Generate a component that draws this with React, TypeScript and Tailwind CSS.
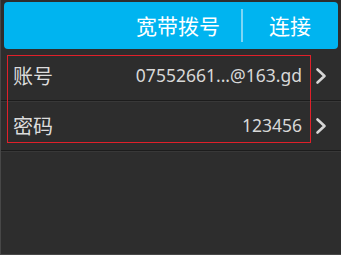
import React from "react";

const Chevron = () => (
  <svg width="12" height="18" viewBox="0 0 12 18" className="shrink-0">
    <polyline points="2.5,2.5 9.5,9 2.5,15.5" fill="none" stroke="#d6d6d6" strokeWidth="2.6" strokeLinecap="round" strokeLinejoin="round" />
  </svg>
);

const Row = ({ label, value }: { label: string; value: string }) => (
  <div className="flex items-center h-[48px] pl-[12px] pr-[14px]">
    <span className="text-[20px] text-[#dcdcdc] leading-none" style={{ fontFamily: '"Noto Sans CJK SC", sans-serif' }}>{label}</span>
    <span className="ml-auto text-[17.5px] text-[#d8d8d8] leading-none" style={{ fontFamily: '"Noto Sans", "DejaVu Sans", sans-serif' }}>{value}</span>
    <span className="ml-[13px]"><Chevron /></span>
  </div>
);

export default function App() {
  return (
    <div className="relative w-[341px] h-[255px] bg-[#2d2d2d] border-l border-b border-[#474747] overflow-hidden">
      <div className="mx-[3px] mt-[2px] h-[47px] rounded-[4px] bg-[#00b4f0] flex items-center justify-end pr-[27px] text-white text-[21px]" style={{ fontFamily: '"Noto Sans CJK SC", sans-serif' }}>
        <span className="leading-none">宽带拨号</span>
        <span className="w-[2px] h-[33px] bg-[#7ed6f5] ml-[21px] mr-[26px]"></span>
        <span className="leading-none">连接</span>
      </div>
      <div className="mt-[3px]">
        <Row label="账号" value="07552661...@163.gd" />
        <div className="h-[1px] bg-[#1c1c1c]" />
        <div className="h-[1px] bg-[#383838]" />
        <Row label="密码" value="123456" />
        <div className="h-[1px] bg-[#1c1c1c]" />
        <div className="h-[1px] bg-[#383838]" />
      </div>
      <div className="absolute left-[6px] top-[55px] w-[304px] h-[88px] border border-[#e0202a]" />
    </div>
  );
}
